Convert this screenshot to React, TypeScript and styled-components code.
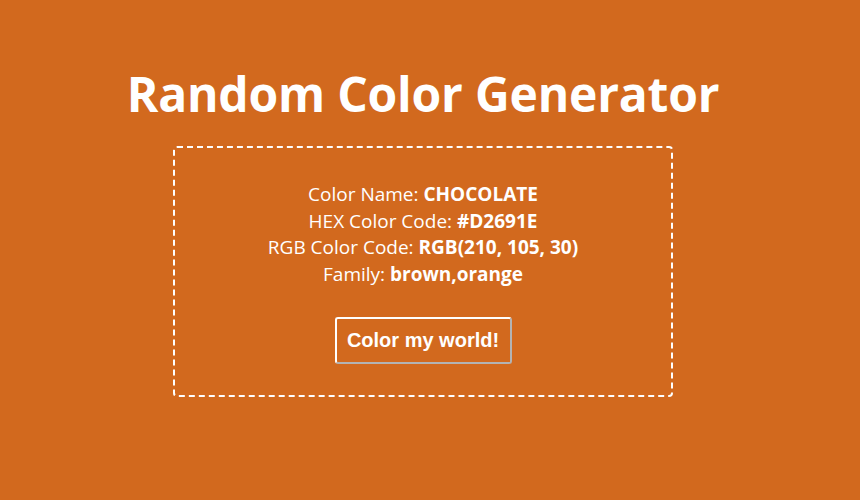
import React from "react";
import styled, { createGlobalStyle } from "styled-components";

const Global = createGlobalStyle`
  html, body { margin: 0; padding: 0; }
  body {
    background: #d2691e;
    font-family: "Open Sans", "Noto Sans", sans-serif;
    color: #ffffff;
    overflow: hidden;
  }
`;

const Page = styled.main`
  width: 846px;
  height: 500px;
  display: flex;
  flex-direction: column;
  align-items: center;
  padding-top: 66px;
  box-sizing: border-box;
`;

const Title = styled.h1`
  margin: 0 0 24px;
  font-size: 48px;
  font-weight: 700;
  line-height: 56px;
  letter-spacing: -0.2px;
`;

const Card = styled.section`
  width: 500px;
  height: 251px;
  box-sizing: border-box;
  border: 2px dashed #ffffff;
  border-radius: 4px;
  display: flex;
  flex-direction: column;
  align-items: center;
  padding-top: 33px;
`;

const Info = styled.p`
  margin: 0;
  font-size: 19px;
  line-height: 26.7px;
  text-align: center;
`;

const Strong = styled.b`
  font-weight: 700;
`;

const Button = styled.button`
  margin-top: 29px;
  background: transparent;
  color: #ffffff;
  font-family: "Liberation Sans", Arial, sans-serif;
  font-weight: 700;
  font-size: 20px;
  padding: 0 10px;
  height: 47px;
  width: 177px;
  border: 2px solid;
  border-color: #ffffff #b3b3b3 #b3b3b3 #ffffff;
  border-radius: 3px;
  cursor: pointer;
`;

const color = {
  name: "CHOCOLATE",
  hex: "#D2691E",
  rgb: "RGB(210, 105, 30)",
  family: "brown,orange",
};

export default function App() {
  return (
    <>
      <Global />
      <Page>
        <Title>Random Color Generator</Title>
        <Card>
          <Info>
            Color Name: <Strong>{color.name}</Strong>
          </Info>
          <Info>
            HEX Color Code: <Strong>{color.hex}</Strong>
          </Info>
          <Info>
            RGB Color Code: <Strong>{color.rgb}</Strong>
          </Info>
          <Info>
            Family: <Strong>{color.family}</Strong>
          </Info>
          <Button>Color my world!</Button>
        </Card>
      </Page>
    </>
  );
}
